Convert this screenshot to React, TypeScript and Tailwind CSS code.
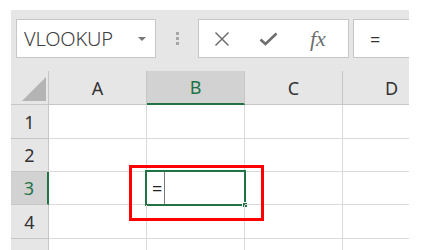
import React from 'react';

const cols = ['A', 'B', 'C', 'D'];
const rows = [
  { n: '1', h: 'h-[34px]' },
  { n: '2', h: 'h-[33px]' },
  { n: '3', h: 'h-[33px]' },
  { n: '4', h: 'h-[34px]' },
  { n: '5', h: 'h-[34px]' },
];

function FormulaBar() {
  return (
    <div className="flex h-[61px] items-start pt-[9px]">
      {/* Name box */}
      <div className="ml-[5px] flex h-[39px] w-[140px] shrink-0 items-center border border-[#c6c6c6] bg-white pl-[7px]">
        <span className="text-[20px] font-light leading-none text-[#404040] tracking-[-0.2px]">VLOOKUP</span>
        <span className="ml-auto mr-[9px] h-0 w-0 border-x-[4px] border-t-[4px] border-x-transparent border-t-[#777]" />
      </div>
      {/* Divider dots */}
      <div className="flex h-[39px] w-[42px] shrink-0 flex-col items-center justify-center gap-[2px]">
        <span className="h-[3px] w-[3px] bg-[#a6a6a6]" />
        <span className="h-[3px] w-[3px] bg-[#a6a6a6]" />
        <span className="h-[3px] w-[3px] bg-[#a6a6a6]" />
      </div>
      {/* Cancel / Enter / fx */}
      <div className="flex h-[39px] w-[151px] shrink-0 items-center border border-[#c6c6c6] bg-white">
        <svg className="ml-[15px]" width="16" height="16" viewBox="0 0 16 16">
          <path d="M1.5 1.5 L14.5 14.5 M14.5 1.5 L1.5 14.5" stroke="#6e6e6e" strokeWidth="1.5" fill="none" />
        </svg>
        <svg className="ml-[29px]" width="19" height="14" viewBox="0 0 19 14">
          <path d="M1.5 7.5 L6.5 12 L17.5 1.5" stroke="#6e6e6e" strokeWidth="2.6" fill="none" />
        </svg>
        <span className="ml-[32px] font-['Liberation_Serif',serif] text-[22px] italic leading-none text-[#6e6e6e]">fx</span>
      </div>
      {/* Formula input */}
      <div className="ml-[4px] flex h-[39px] w-[80px] shrink-0 items-center border-y border-l border-[#c6c6c6] bg-white pl-[16px]">
        <span className="text-[18px] leading-none text-[#333]">=</span>
      </div>
    </div>
  );
}

function Grid() {
  return (
    <div className="grid w-[430px] grid-cols-[38px_98px_98px_98px_98px] bg-white">
      {/* header row */}
      <div className="relative h-[34px] border-r border-b border-[#c6c6c6] bg-[#e6e6e6]">
        <svg className="absolute left-[11px] top-[6px]" width="24" height="24" viewBox="0 0 24 24">
          <path d="M24 0 L24 24 L0 24 Z" fill="#b4b4b4" />
        </svg>
      </div>
      {cols.map((c) => (
        <div
          key={c}
          className={`flex h-[34px] items-center justify-center border-r text-[18px] leading-none ${
            c === 'B'
              ? 'border-b-2 border-r-[#c6c6c6] border-b-[#217346] bg-[#d2d2d2] text-[#217346]'
              : 'border-b border-[#c6c6c6] bg-[#e6e6e6] text-[#333]'
          }`}
        >
          {c}
        </div>
      ))}

      {rows.map((r) => (
        <React.Fragment key={r.n}>
          <div
            className={`flex ${r.h} items-center justify-center border-b border-[#c6c6c6] text-[18px] leading-none ${
              r.n === '3'
                ? 'border-r-2 border-r-[#217346] bg-[#d2d2d2] text-[#217346]'
                : 'border-r border-r-[#c6c6c6] bg-[#e6e6e6] text-[#333]'
            }`}
          >
            {r.n}
          </div>
          {cols.map((c) => (
            <div key={c} className={`relative ${r.h} border-r border-b border-[#dadada]`}>
              {r.n === '3' && c === 'B' && (
                <>
                  <div className="flex h-full items-center">
                    <span className="pl-[5px] text-[18px] leading-none text-[#222]">=</span>
                    <span className="ml-[2px] h-full w-[1px] bg-[#7a7a7a]" />
                  </div>
                  <div className="absolute -left-[2px] -top-[2px] h-[36px] w-[101px] border-2 border-[#217346]">
                    <span className="absolute -bottom-[4px] -right-[4px] h-[6px] w-[6px] border border-white bg-[#217346]" />
                  </div>
                </>
              )}
            </div>
          ))}
        </React.Fragment>
      ))}
    </div>
  );
}

export default function App() {
  return (
    <div className="relative h-[250px] w-[434px] overflow-hidden bg-white font-['Noto_Sans','Liberation_Sans',sans-serif]">
      <div className="ml-[11px] mt-[10px] h-[240px] w-[398px] overflow-hidden bg-[#e6e6e6]">
        <FormulaBar />
        <Grid />
      </div>
      {/* red highlight */}
      <div className="absolute left-[129px] top-[165px] h-[56px] w-[135px] border-[3px] border-[#ff0000]" />
    </div>
  );
}
